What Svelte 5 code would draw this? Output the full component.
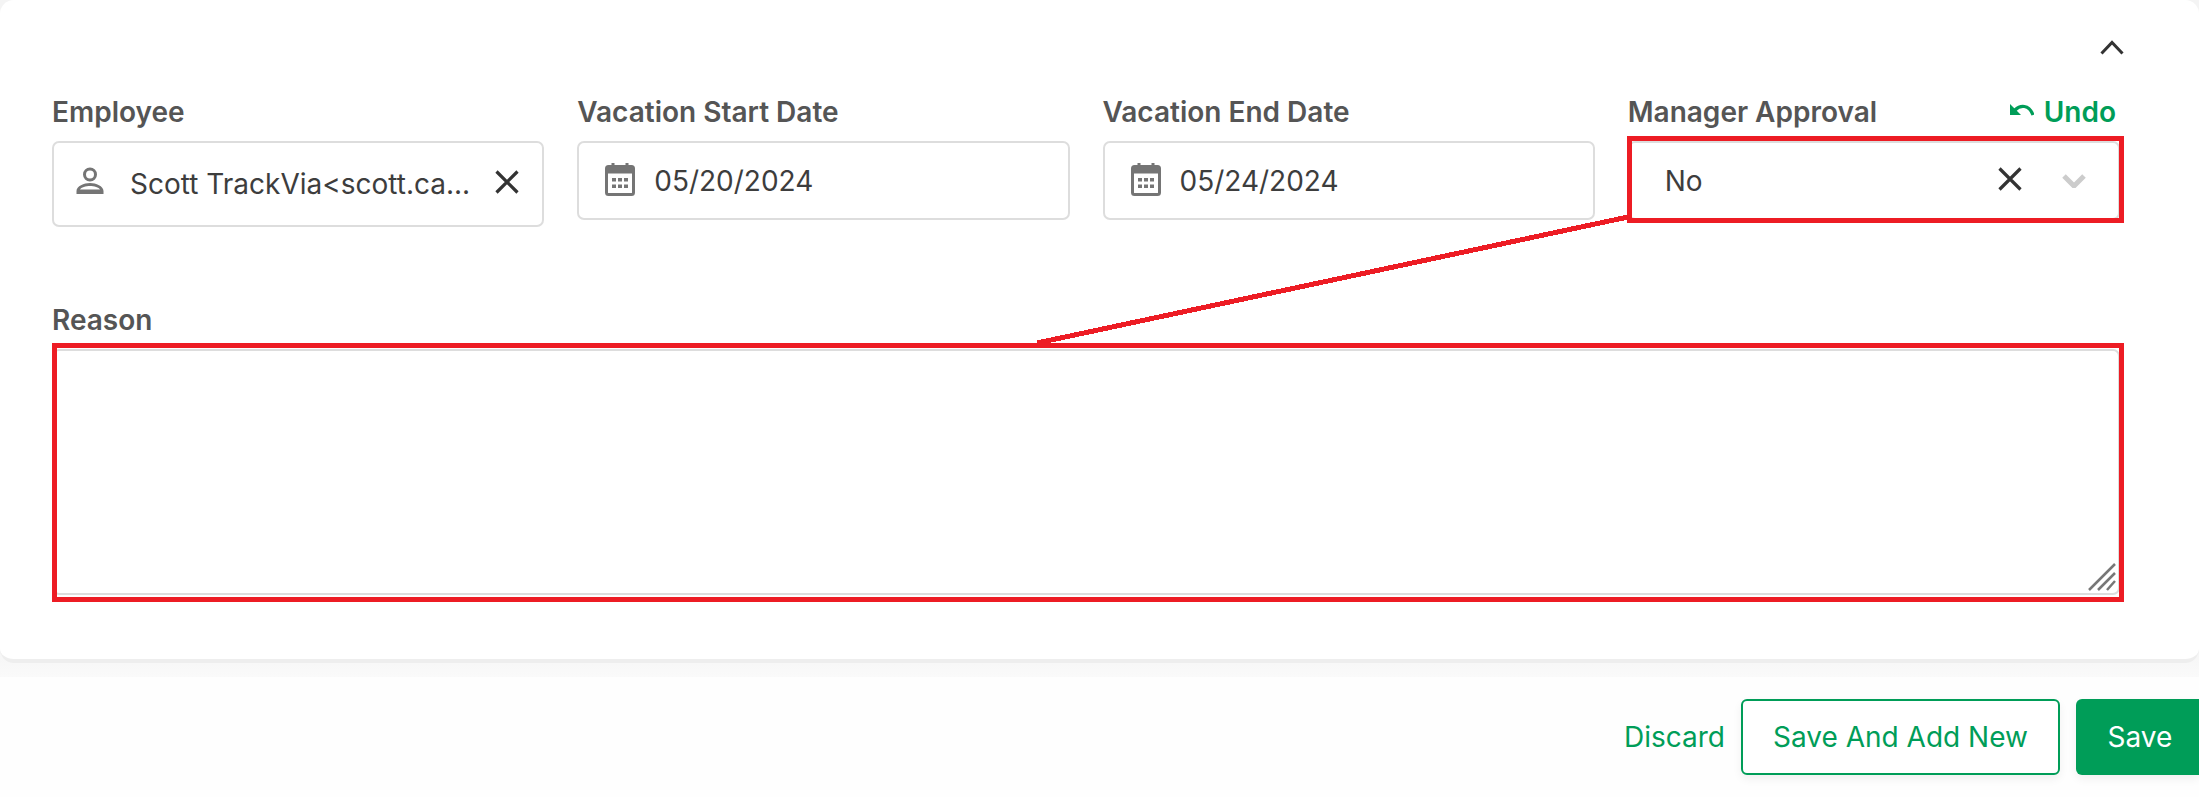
<script>
  const fields = [
    { label: 'Vacation Start Date', value: '05/20/2024' },
    { label: 'Vacation End Date', value: '05/24/2024' },
  ];
</script>

{#snippet closeIcon()}
  <svg class="close" viewBox="0 0 24 24" aria-hidden="true">
    <path d="M1.5 1.5L22.5 22.5M22.5 1.5L1.5 22.5" />
  </svg>
{/snippet}

<div class="page">
  <div class="sheet">
    <section class="card">
      <div class="card-head">
        <svg class="collapse" viewBox="0 0 24 15" aria-hidden="true"><path d="M1.5 13.5L12 2.5L22.5 13.5" /></svg>
      </div>

      <div class="row">
        <div class="field">
          <div class="label-row"><span class="label">Employee</span></div>
          <div class="box box-tall">
            <svg class="person" viewBox="0 0 28 27" aria-hidden="true">
              <circle cx="14" cy="7.5" r="5.5" />
              <path fill-rule="evenodd" d="M0.5 27v-3C0.5 19 8 16 14 16s13.5 3 13.5 8v3zM4 22.5h20C23 20.5 18 19 14 19S5 20.5 4 22.5z" />
            </svg>
            <span class="value employee">Scott TrackVia&lt;scott.ca...</span>
            {@render closeIcon()}
          </div>
        </div>

        {#each fields as f}
          <div class="field">
            <div class="label-row"><span class="label">{f.label}</span></div>
            <div class="box">
              <svg class="calendar" viewBox="0 0 30 34" aria-hidden="true">
                <path class="cal-frame" d="M8 1v5M22 1v5" />
                <rect class="cal-frame" x="1.5" y="4.5" width="27" height="28" rx="2" />
                <rect class="cal-fill" x="1.5" y="4.5" width="27" height="7" />
                <g class="cal-fill">
                  <rect x="7" y="16" width="4" height="3.5" /><rect x="13" y="16" width="4" height="3.5" /><rect x="19" y="16" width="4" height="3.5" />
                  <rect x="7" y="22.5" width="4" height="3.5" /><rect x="13" y="22.5" width="4" height="3.5" /><rect x="19" y="22.5" width="4" height="3.5" />
                </g>
              </svg>
              <span class="value">{f.value}</span>
            </div>
          </div>
        {/each}

        <div class="field">
          <div class="label-row">
            <span class="label">Manager Approval</span>
            <span class="undo">
              <svg viewBox="0 0 24 12" aria-hidden="true"><path d="M0 0v11h11z" class="undo-head" /><path class="undo-line" d="M5 6c5-5 14-6 18 5" /></svg>
              Undo
            </span>
          </div>
          <div class="box select">
            <span class="value no">No</span>
            {@render closeIcon()}
            <svg class="chevron" viewBox="0 0 24 14" aria-hidden="true"><path d="M2 2l10 10L22 2" /></svg>
          </div>
        </div>
      </div>

      <div class="reason">
        <div class="label-row"><span class="label">Reason</span></div>
        <div class="textarea">
          <svg class="grip" viewBox="0 0 28 28" aria-hidden="true">
            <path d="M1 27L27 1M10 27L27 10M19 27L27 18" />
          </svg>
        </div>
      </div>
    </section>
  </div>

  <footer class="footer">
    <button class="discard">Discard</button>
    <button class="outline">Save And Add New</button>
    <button class="primary">Save</button>
  </footer>

  <!-- annotation drawn on top of the screenshot -->
  <svg class="markup" viewBox="0 0 2199 797" aria-hidden="true">
    <rect x="1629.5" y="138.5" width="492" height="82" />
    <rect x="54.5" y="345.5" width="2067" height="254" />
    <line x1="1628" y1="217" x2="1037" y2="343" />
  </svg>
</div>

<style>
  :global(body) {
    margin: 0;
    background: #fefefe;
    font-family: Inter, "Noto Sans", sans-serif;
  }
  .page {
    position: relative;
    width: 2199px;
    height: 797px;
    overflow: hidden;
  }
  .sheet {
    padding-bottom: 14px;
    background: linear-gradient(#f4f4f4 0, #f4f4f4 640px, #fafafa 100%);
  }
  .card {
    box-sizing: border-box;
    height: 663px;
    padding: 0 79px 0 52px;
    background: #fff;
    border-bottom: 4px solid #eee;
    border-radius: 14px;
  }
  .card-head {
    display: flex;
    justify-content: flex-end;
    height: 96px;
    padding-top: 40px;
    box-sizing: border-box;
  }
  .collapse {
    width: 24px;
    height: 15px;
    margin-right: -4px;
    fill: none;
    stroke: #333;
    stroke-width: 3;
  }
  .row {
    display: grid;
    grid-template-columns: repeat(4, 1fr);
    gap: 33px;
    align-items: start;
  }
  .label-row {
    display: flex;
    justify-content: space-between;
    align-items: center;
    height: 34px;
    margin-bottom: 11px;
  }
  .label {
    font-size: 28px;
    font-weight: 600;
    color: #555;
    margin-top: -2px;
  }
  .undo {
    display: flex;
    align-items: center;
    gap: 10px;
    margin-right: 4px;
    margin-top: -2px;
    font-size: 28px;
    font-weight: 600;
    color: #009d58;
  }
  .undo svg {
    width: 24px;
    height: 12px;
    margin-bottom: 4px;
  }
  .undo-head {
    fill: #009d58;
  }
  .undo-line {
    fill: none;
    stroke: #009d58;
    stroke-width: 3.2;
  }
  .box {
    box-sizing: border-box;
    display: flex;
    align-items: center;
    height: 79px;
    padding: 0 0 0 26px;
    background: #fff;
    border: 2px solid #ddd;
    border-radius: 7px;
  }
  .box-tall {
    height: 86px;
    padding-left: 22px;
    padding-right: 23px;
  }
  .value {
    font-size: 28px;
    color: #3d3d3d;
    white-space: nowrap;
  }
  .employee {
    flex: 1;
    margin-left: 26px;
  }
  .no {
    flex: 1;
    margin-left: 9px;
  }
  .close {
    flex: none;
    width: 24px;
    height: 24px;
    margin-top: -4px;
    fill: none;
    stroke: #333;
    stroke-width: 3.2;
  }
  .select {
    padding-right: 32px;
  }
  .chevron {
    flex: none;
    width: 24px;
    height: 14px;
    margin-left: 40px;
    fill: none;
    stroke: #ccc;
    stroke-width: 5;
  }
  .person {
    flex: none;
    width: 28px;
    height: 27px;
    margin-top: -8px;
    fill: #757575;
  }
  .person circle {
    fill: none;
    stroke: #757575;
    stroke-width: 3;
  }
  .calendar {
    flex: none;
    width: 30px;
    height: 34px;
    margin-top: -3px;
    margin-right: 19px;
  }
  .cal-frame {
    fill: none;
    stroke: #757575;
    stroke-width: 3;
  }
  .cal-fill {
    fill: #757575;
  }
  .reason {
    margin-top: 77px;
  }
  .reason .label-row {
    margin-bottom: 11px;
  }
  .textarea {
    position: relative;
    box-sizing: border-box;
    height: 246px;
    border: 2px solid #ddd;
    border-radius: 7px;
  }
  .grip {
    position: absolute;
    right: 2px;
    bottom: 2px;
    width: 28px;
    height: 28px;
    fill: none;
    stroke: #777;
    stroke-width: 2.5;
  }
  .footer {
    display: flex;
    justify-content: flex-end;
    align-items: center;
    gap: 16px;
    padding-top: 22px;
  }
  button {
    font-family: inherit;
    font-size: 28px;
    height: 76px;
    border-radius: 6px;
    cursor: pointer;
  }
  .discard {
    padding: 0;
    border: none;
    background: none;
    color: #009d58;
  }
  .outline {
    width: 319px;
    padding: 0;
    background: #fff;
    border: 2px solid #009d58;
    color: #009d58;
    box-shadow: 0 4px 10px rgba(0, 0, 0, 0.06);
  }
  .primary {
    box-sizing: border-box;
    width: 123px;
    padding: 0 0 0 5px;
    background: #009d58;
    border: none;
    color: #fff;
    border-radius: 6px 0 0 6px;
    box-shadow: 0 4px 10px rgba(0, 0, 0, 0.06);
  }
  .markup {
    position: absolute;
    inset: 0;
    width: 2199px;
    height: 797px;
    pointer-events: none;
    fill: none;
    stroke: #ed1c24;
    stroke-width: 5;
    shape-rendering: crispEdges;
  }
</style>
